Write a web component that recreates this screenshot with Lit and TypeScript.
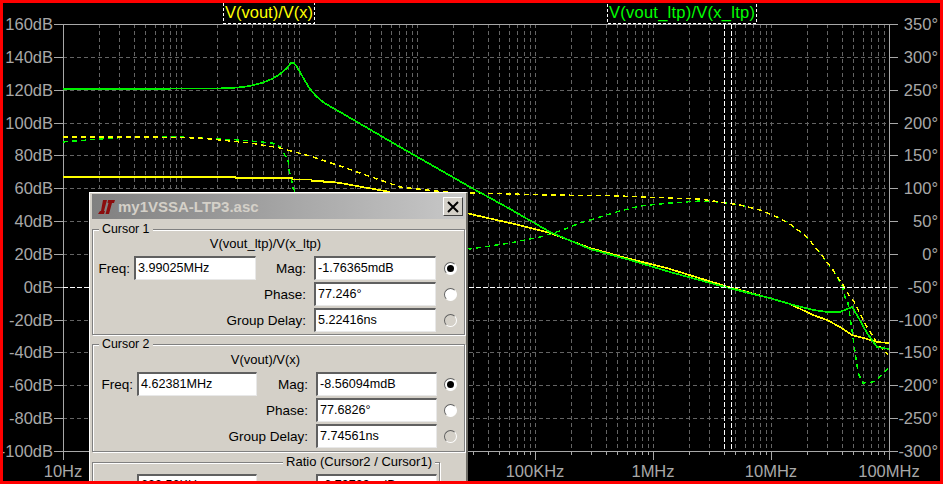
import { LitElement, html, css, svg } from "lit";
import { customElement } from "lit/decorators.js";

const X0 = 63, X1 = 889, Y0 = 24, Y1 = 451;
const DEC = (X1 - X0) / 7;
const DIV = (Y1 - Y0) / 13;
const snap = (v: number) => Math.round(v) + 0.5;

const majors: number[] = [];
const minors: number[] = [];
for (let d = 0; d <= 7; d++) {
  majors.push(snap(X0 + d * DEC));
  if (d < 7) for (let m = 2; m <= 9; m++) minors.push(snap(X0 + (d + Math.log10(m)) * DEC));
}
const rows = Array.from({ length: 14 }, (_, i) => snap(Y0 + i * DIV));
const leftLabels = rows.map((_, i) => `${160 - i * 20}dB`);
const rightLabels = rows.map((_, i) => `${350 - i * 50}°`);
const bottomLabels: [string, number][] = [
  ["10Hz", 0], ["100KHz", 4], ["1MHz", 5], ["10MHz", 6], ["100MHz", 7],
];

const greenSolid = "63,89 218,88.5 238,87.5 250,86 262,83 272,79 280,74 287,68 291,63 294,63 297,67 300,72 305,81 310,89 316,96 323,102 331,107 340,112 400,147 470,187 510,209 550,232 590,249 630,260 670,272 725,287 773,299 790,304 813,310 827,312 840,312 852,307 857,315 867,333 877,347 889,349";
const yellowSolid = "63,177 235,177 236,178 292,178 293,179.5 311,179.5 312,181 323,181 324,182 332,182 340,183 368,188 385,191 440,205 470,214 510,223 550,233 590,248 630,259 670,269 725,286 773,299 790,304 813,315 827,320 840,327 852,335 867,339 877,342 889,343";
const yellowDash = "63,137 150,137 200,138 250,143 280,148 313,157 340,166 400,187 445,192 470,193 510,194 550,195 600,195.5 620,196 670,198 700,199 720,202 740,205 760,210 777,217 790,224 807,237 820,253 833,270 843,285 850,297 853,300 867,327 877,343 888,355";
const greenDash = "63,142 75,141 100,139 130,137 180,137 240,140 272,143 280,147 285,155 288,160 289,170 291,177 293,188 300,200 470,249 510,243 540,237 560,231 580,223 600,217 620,211 640,206 670,203 700,201 720,202 740,205 760,210 777,217 790,224 807,237 820,253 833,270 842,285 845,297 848,303 853,337 858,373 863,383 873,382 880,377 888,368";

type Field = { label: string; value: string };

@customElement("app-root")
export class AppRoot extends LitElement {
  static styles = css`
    :host { display: block; width: 943px; height: 484px; }
    .screen {
      position: relative; width: 943px; height: 484px; box-sizing: border-box;
      border: 3px solid #ff0000; background: #000; overflow: hidden;
      font-family: "Liberation Sans", Arial, sans-serif;
    }
    .plot { display: block; }
    .plot text { font-family: "Liberation Sans", Arial, sans-serif; font-size: 16.5px; }
    .plot .wide { letter-spacing: 0.25px; }
    .lab { fill: #a8a8a8; }
    .grid { stroke: #646464; stroke-width: 1; stroke-dasharray: 4 3; fill: none; shape-rendering: crispEdges; }
    .axis { stroke: #a8a8a8; stroke-width: 1; fill: none; shape-rendering: crispEdges; }
    .cur { stroke: #fff; stroke-width: 1; stroke-dasharray: 5 2; fill: none; shape-rendering: crispEdges; }
    .box { stroke: #fff; stroke-width: 1; stroke-dasharray: 3 2; fill: none; shape-rendering: crispEdges; }
    .tr { fill: none; stroke-width: 1.7; shape-rendering: crispEdges; }
    .trd { fill: none; stroke-width: 1.4; stroke-dasharray: 5 4; shape-rendering: crispEdges; }

    .dialog {
      position: absolute; left: 86px; top: 189px; width: 379px; height: 310px;
      box-sizing: border-box; background: #d4d0c8; color: #000;
      border-top: 1px solid #fff; border-left: 1px solid #fff;
      border-right: 2px solid #6e6c66; border-bottom: 2px solid #6e6c66;
      padding: 1px 1px 0 2px;
      display: flex; flex-direction: column;
      font-size: 13px;
    }
    .title {
      height: 25px; flex: none; display: flex; align-items: center; gap: 3px; padding: 0 2px 0 6px;
      background: linear-gradient(90deg, #808080, #c8c8c8);
    }
    .title .name { flex: 1; font-size: 15px; font-weight: bold; color: #d4d0c8; white-space: nowrap; }
    .close {
      width: 20px; height: 19px; box-sizing: border-box; background: #d4d0c8;
      border-top: 1px solid #fff; border-left: 1px solid #fff;
      border-right: 1px solid #404040; border-bottom: 1px solid #404040;
      display: flex; align-items: center; justify-content: center;
    }
    .group {
      position: relative; flex: none; box-sizing: border-box; width: 373px;
      border: 1px solid #808080; box-shadow: inset 1px 1px 0 #fff, 1px 1px 0 #fff;
    }
    .g1 { margin-top: 10px; height: 106px; padding-top: 5px; }
    .g2 { margin-top: 9px; height: 108px; padding-top: 6px; }
    .g3 { margin-top: 10px; width: 348px; height: 40px; padding-top: 11px; }
    .legend {
      position: absolute; top: -9px; left: 6px; background: #d4d0c8; padding: 0 3px;
      line-height: 16px; white-space: nowrap; font-size: 12.4px;
    }
    .g3 .legend { left: auto; right: 4px; font-size: 13px; }
    .caption { line-height: 17px; height: 17px; margin-bottom: 4px; padding-right: 26px; text-align: center; }
    .fields {
      display: grid; grid-template-columns: 41px 122px 58px 122px 28px;
      grid-auto-rows: 24px; row-gap: 2px; align-items: center;
    }
    .g2 .fields, .g3 .fields { grid-template-columns: 44px 120px 59px 121px 27px; }
    .lbl { text-align: right; padding-right: 8px; white-space: nowrap; font-size: 13.5px; }
    .lbl.long { grid-column: 1 / 4; }
    .freqlbl { padding-right: 4px; }
    .inp {
      box-sizing: border-box; height: 24px; background: #fff;
      border-top: 2px solid #606060; border-left: 2px solid #606060;
      border-right: 1px solid #e8e8e8; border-bottom: 1px solid #e8e8e8;
      padding-left: 2px; line-height: 20px; white-space: nowrap; overflow: hidden; font-size: 12.6px;
    }
    .inp.start { grid-column: 2; line-height: 18px; }
    .inp.end { grid-column: 4; line-height: 18px; }
    .radio {
      justify-self: center; width: 13px; height: 13px; border-radius: 50%; box-sizing: border-box;
      background: #fff; border: 1px solid; border-color: #606060 #fff #fff #606060;
      display: flex; align-items: center; justify-content: center;
    }
    .radio.dim { background: #d4d0c8; }
    .dot { width: 7px; height: 7px; border-radius: 50%; background: #000; }
  `;

  private plot() {
    return svg`
      <svg class="plot" width="937" height="478" viewBox="3 3 937 478">
        ${rows.slice(1, -1).map(y => svg`<line class="grid" x1=${X0} x2=${X1} y1=${y} y2=${y}></line>`)}
        ${minors.map(x => svg`<line class="grid" x1=${x} x2=${x} y1=${Y0} y2=${Y1}></line>`)}
        ${majors.slice(1, -1).map(x => svg`<line class="grid" x1=${x} x2=${x} y1=${Y0} y2=${Y1}></line>`)}
        <rect class="axis" x=${X0 + 0.5} y=${Y0 + 0.5} width=${X1 - X0} height=${Y1 - Y0}></rect>
        ${rows.map(y => svg`
          <line class="axis" x1=${X0 - 9} x2=${X0} y1=${y} y2=${y}></line>
          <line class="axis" x1=${X1} x2=${X1 + 9} y1=${y} y2=${y}></line>`)}
        ${majors.map(x => svg`<line class="axis" x1=${x} x2=${x} y1=${Y1} y2=${Y1 + 9}></line>`)}
        ${minors.map(x => svg`<line class="axis" x1=${x} x2=${x} y1=${Y1} y2=${Y1 + 4}></line>`)}
        <polyline class="trd" stroke="#00ff00" points=${greenDash}></polyline>
        <polyline class="trd" stroke="#ffff00" points=${yellowDash}></polyline>
        <polyline class="tr" stroke="#ffff00" points=${yellowSolid}></polyline>
        <polyline class="tr" stroke="#00f000" points=${greenSolid}></polyline>
        <line class="cur" x1="724.5" x2="724.5" y1=${Y0} y2=${Y1}></line>
        <line class="cur" x1="731.5" x2="731.5" y1=${Y0} y2=${Y1}></line>
        <line class="cur" x1=${X0} x2=${X1} y1="287.5" y2="287.5"></line>
        ${rows.map((y, i) => svg`
          <text class="lab" x="53" y=${y + 5.5} text-anchor="end">${leftLabels[i]}</text>
          <text class="lab" x="938" y=${y + 5.5} text-anchor="end">${rightLabels[i]}</text>`)}
        ${bottomLabels.map(([t, d]) => svg`<text class="lab" x=${X0 + d * DEC} y="477" text-anchor="middle">${t}</text>`)}
        <rect class="box" x="223.5" y="2.5" width="91" height="20.5"></rect>
        <text x="225" y="18" fill="#ffff00">V(vout)/V(x)</text>
        <rect class="box" x="607.5" y="2.5" width="149" height="20.5"></rect>
        <text class="wide" x="609" y="18" fill="#00ff00">V(vout_ltp)/V(x_ltp)</text>
      </svg>`;
  }

  private fields(freq: string, rowsData: Field[]) {
    return html`<div class="fields">
      <span class="lbl freqlbl">Freq:</span>
      <div class="inp">${freq}</div>
      <span class="lbl">${rowsData[0].label}</span>
      <div class="inp">${rowsData[0].value}</div>
      <span class="radio"><span class="dot"></span></span>
      ${rowsData.slice(1).map((r, i) => html`
        <span class="lbl long">${r.label}</span>
        <div class="inp">${r.value}</div>
        <span class="radio ${i === 1 ? "dim" : ""}"></span>`)}
    </div>`;
  }

  render() {
    return html`<div class="screen">
      ${this.plot()}
      <div class="dialog">
        <div class="title">
          <svg width="17" height="14" viewBox="0 0 17 14">
            <path d="M5 0H9L6 11H7L6 14H0L2 11H3ZM10 0H17L16 3H14L11 14H7.5L10.5 3H9.5Z" fill="#8b0d0d"></path>
          </svg>
          <span class="name">my1VSSA-LTP3.asc</span>
          <div class="close">
            <svg width="12" height="12" viewBox="0 0 12 12"><path d="M1 1L11 11M11 1L1 11" stroke="#000" stroke-width="2"></path></svg>
          </div>
        </div>
        <div class="group g1">
          <span class="legend">Cursor 1</span>
          <div class="caption">V(vout_ltp)/V(x_ltp)</div>
          ${this.fields("3.99025MHz", [
            { label: "Mag:", value: "-1.76365mdB" },
            { label: "Phase:", value: "77.246°" },
            { label: "Group Delay:", value: "5.22416ns" },
          ])}
        </div>
        <div class="group g2">
          <span class="legend">Cursor 2</span>
          <div class="caption">V(vout)/V(x)</div>
          ${this.fields("4.62381MHz", [
            { label: "Mag:", value: "-8.56094mdB" },
            { label: "Phase:", value: "77.6826°" },
            { label: "Group Delay:", value: "7.74561ns" },
          ])}
        </div>
        <div class="group g3">
          <span class="legend">Ratio (Cursor2 / Cursor1)</span>
          <div class="fields">
            <div class="inp start">633.56KHz</div>
            <div class="inp end">-6.79729mdB</div>
          </div>
        </div>
      </div>
    </div>`;
  }
}
